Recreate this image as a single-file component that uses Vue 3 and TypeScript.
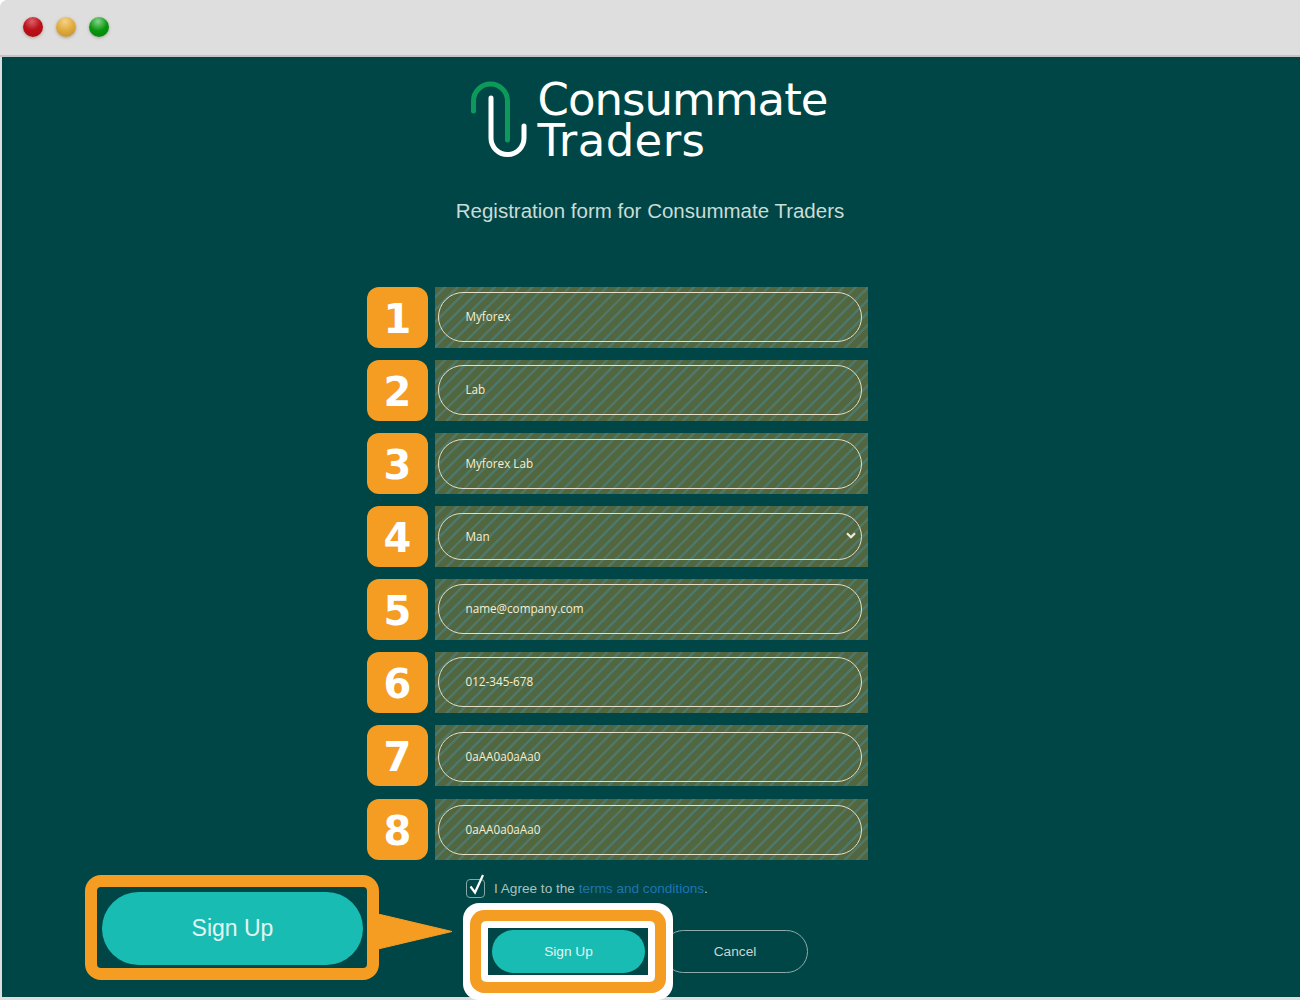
<script setup lang="ts">
interface Field {
  n: number
  value: string
  offset: number
}
const fields: Field[] = [
  { n: 1, value: 'Myforex', offset: 5 },
  { n: 2, value: 'Lab', offset: 5 },
  { n: 3, value: 'Myforex Lab', offset: 6 },
  { n: 4, value: 'Man', offset: 7 },
  { n: 5, value: 'name@company.com', offset: 5 },
  { n: 6, value: '012-345-678', offset: 5 },
  { n: 7, value: '0aAA0a0aAa0', offset: 7 },
  { n: 8, value: '0aAA0a0aAa0', offset: 6 },
]
</script>

<template>
  <div class="window">
    <header class="titlebar">
      <span class="dot red"></span>
      <span class="dot yellow"></span>
      <span class="dot green"></span>
    </header>
    <main class="page">
      <div class="logo">
        <svg class="clip" width="60" height="82" viewBox="0 0 60 82" fill="none" stroke-width="5" stroke-linecap="round">
          <path d="M3.5 31V21a17 17 0 0 1 34 0V60" stroke="#0c9a5b" />
          <path d="M21 18V58a16.5 16.5 0 0 0 33 0V46" stroke="#ffffff" />
        </svg>
        <div class="wordmark">
          <div>Consummate</div>
          <div class="second">Traders</div>
        </div>
      </div>
      <h1 class="title">Registration form for Consummate Traders</h1>

      <form class="form" @submit.prevent>
        <div v-for="f in fields" :key="f.n" class="row">
          <div class="badge">{{ f.n }}</div>
          <div class="hatch">
            <div v-if="f.n === 4" class="pill select" :style="{ marginTop: f.offset + 'px' }">
              <span>{{ f.value }}</span>
              <svg width="10" height="7" viewBox="0 0 10 7" fill="none" stroke="#f4eccf" stroke-width="2.2">
                <path d="M1 1.2 5 5.2 9 1.2" />
              </svg>
            </div>
            <div v-else class="pill" :style="{ marginTop: f.offset + 'px' }">{{ f.value }}</div>
          </div>
        </div>
      </form>

      <label class="agree">
        <span class="checkbox">
          <svg width="20" height="24" viewBox="0 0 20 24" fill="none">
            <path d="M4.5 13.5 9 19.5 17 2" stroke="#ffffff" stroke-width="2.2" />
          </svg>
        </span>
        <span>I Agree to the <a class="link">terms and conditions</a>.</span>
      </label>

      <div class="actions">
        <div class="signup-wrap">
          <button class="btn primary" type="button">Sign Up</button>
          <span class="highlight"></span>
        </div>
        <button class="btn ghost" type="button">Cancel</button>
      </div>

      <div class="callout">
        <div class="callout-box">
          <div class="callout-btn">Sign Up</div>
        </div>
        <svg class="tail" width="76" height="36" viewBox="0 0 76 36">
          <path d="M0 0 74 17.5 0 35Z" fill="#f59c23" stroke="#f59c23" stroke-width="1" stroke-linejoin="round" />
        </svg>
      </div>
    </main>
  </div>
</template>

<style scoped>
.window {
  width: 1300px;
  height: 1000px;
  overflow: hidden;
  display: flex;
  flex-direction: column;
  background: #dedede;
  border-top-left-radius: 8px;
  font-family: "Liberation Sans", Arial, sans-serif;
  box-sizing: border-box;
}
.titlebar {
  height: 57px;
  flex: none;
  display: flex;
  align-items: center;
  gap: 13px;
  padding: 0 0 1px 23px;
  box-sizing: border-box;
  background: #dedede;
  border-bottom: 2px solid #c4c4c4;
}
.dot {
  width: 20px;
  height: 20px;
  border-radius: 50%;
  box-shadow: 0 1px 3px rgba(130, 115, 90, 0.55);
}
.red { background: radial-gradient(circle at 45% 22%, #d9616a 0, #bd1119 45%, #a50d13 100%); }
.yellow { background: radial-gradient(circle at 45% 22%, #f4d286 0, #dfa93c 50%, #bd8c30 100%); }
.green { background: radial-gradient(circle at 45% 22%, #86d48b 0, #08960f 50%, #067c0c 100%); }

.page {
  position: relative;
  flex: 1;
  margin: 0 0 3px 2px;
  background: #004646;
  display: flex;
  flex-direction: column;
  align-items: center;
  min-height: 0;
}
.logo {
  display: flex;
  align-items: flex-start;
  gap: 7px;
  margin: 22px 0 0 -4px;
  height: 84px;
}
.clip { flex: none; margin-top: 1px; }
.wordmark {
  font-family: "DejaVu Sans", sans-serif;
  font-size: 45px;
  line-height: 41px;
  letter-spacing: -1px;
  color: #ffffff;
  font-weight: 400;
}
.second { letter-spacing: 0.4px; }
.title {
  margin: 36px 0 0 -2px;
  font-size: 20.5px;
  line-height: 24px;
  font-weight: 400;
  color: #c9dcd7;
}
.form {
  align-self: flex-start;
  margin: 64px 0 0 365px;
  display: flex;
  flex-direction: column;
  gap: 12px;
}
.row {
  display: flex;
  gap: 7px;
  height: 61px;
}
.row:last-child { margin-top: 1px; }
.badge {
  width: 61px;
  height: 61px;
  padding-top: 2px;
  box-sizing: border-box;
  border-radius: 12px;
  background: #f59c23;
  color: #ffffff;
  font-family: "DejaVu Sans", sans-serif;
  font-weight: 700;
  font-size: 40px;
  display: flex;
  align-items: center;
  justify-content: center;
}
.hatch {
  width: 433px;
  height: 61px;
  box-sizing: border-box;
  padding: 0 6px 0 3px;
  overflow: hidden;
  background: repeating-linear-gradient(135deg, #52663f 0 5.8px, #4e786a 6.4px 8.2px, #52663f 8.8px);
}
.pill {
  height: 50px;
  box-sizing: border-box;
  border: 1.5px solid #e6dfc6;
  border-radius: 25px;
  padding: 0 26.5px 2px;
  display: flex;
  align-items: center;
  font-family: "Open Sans", sans-serif;
  font-size: 11.7px;
  color: #f6efd2;
}
.select {
  height: 47px;
  justify-content: space-between;
  padding-right: 5px;
}
.agree {
  align-self: flex-start;
  margin: 16px 0 0 464px;
  display: flex;
  align-items: center;
  gap: 9px;
  font-size: 13.6px;
  color: #a9c2be;
  height: 24px;
}
.checkbox {
  position: relative;
  width: 19px;
  height: 19px;
  box-sizing: border-box;
  border: 1px solid #86a8a4;
  border-radius: 4px;
}
.checkbox svg { position: absolute; left: -1px; top: -7px; }
.link { color: #1f74b0; }
.actions {
  align-self: flex-start;
  margin: 30px 0 0 490px;
  display: flex;
  gap: 17px;
}
.signup-wrap { position: relative; z-index: 1; display: flex; }
.btn {
  height: 43px;
  border-radius: 22px;
  font-family: "Liberation Sans", Arial, sans-serif;
  font-size: 13.7px;
  box-sizing: border-box;
  padding: 0;
}
.primary {
  width: 153px;
  border: 0;
  background: #19bcb2;
  color: #e3f5f3;
}
.ghost {
  width: 146px;
  background: transparent;
  border: 1px solid #8fabaa;
  color: #c7d6d4;
}
.highlight {
  position: absolute;
  inset: -9px -10px -9px -11px;
  border: 7px solid #ffffff;
  border-radius: 5px;
  box-shadow: 0 0 0 11px #f59c23, 0 0 0 18px #ffffff;
  pointer-events: none;
}
.callout {
  position: absolute;
  left: 83px;
  top: 818px;
  display: flex;
  align-items: center;
}
.callout-box {
  width: 294px;
  height: 105px;
  box-sizing: border-box;
  border: 12px solid #f59c23;
  border-radius: 16px;
  padding: 5px 4px 5px 5px;
}
.callout-btn {
  height: 73px;
  border-radius: 37px;
  background: #19bcb2;
  color: #e3f5f3;
  font-size: 23px;
  display: flex;
  align-items: center;
  justify-content: center;
}
.tail { flex: none; margin: 9px 0 0 -1px; }
</style>

<style>
html, body { margin: 0; background: #ffffff; }
</style>
